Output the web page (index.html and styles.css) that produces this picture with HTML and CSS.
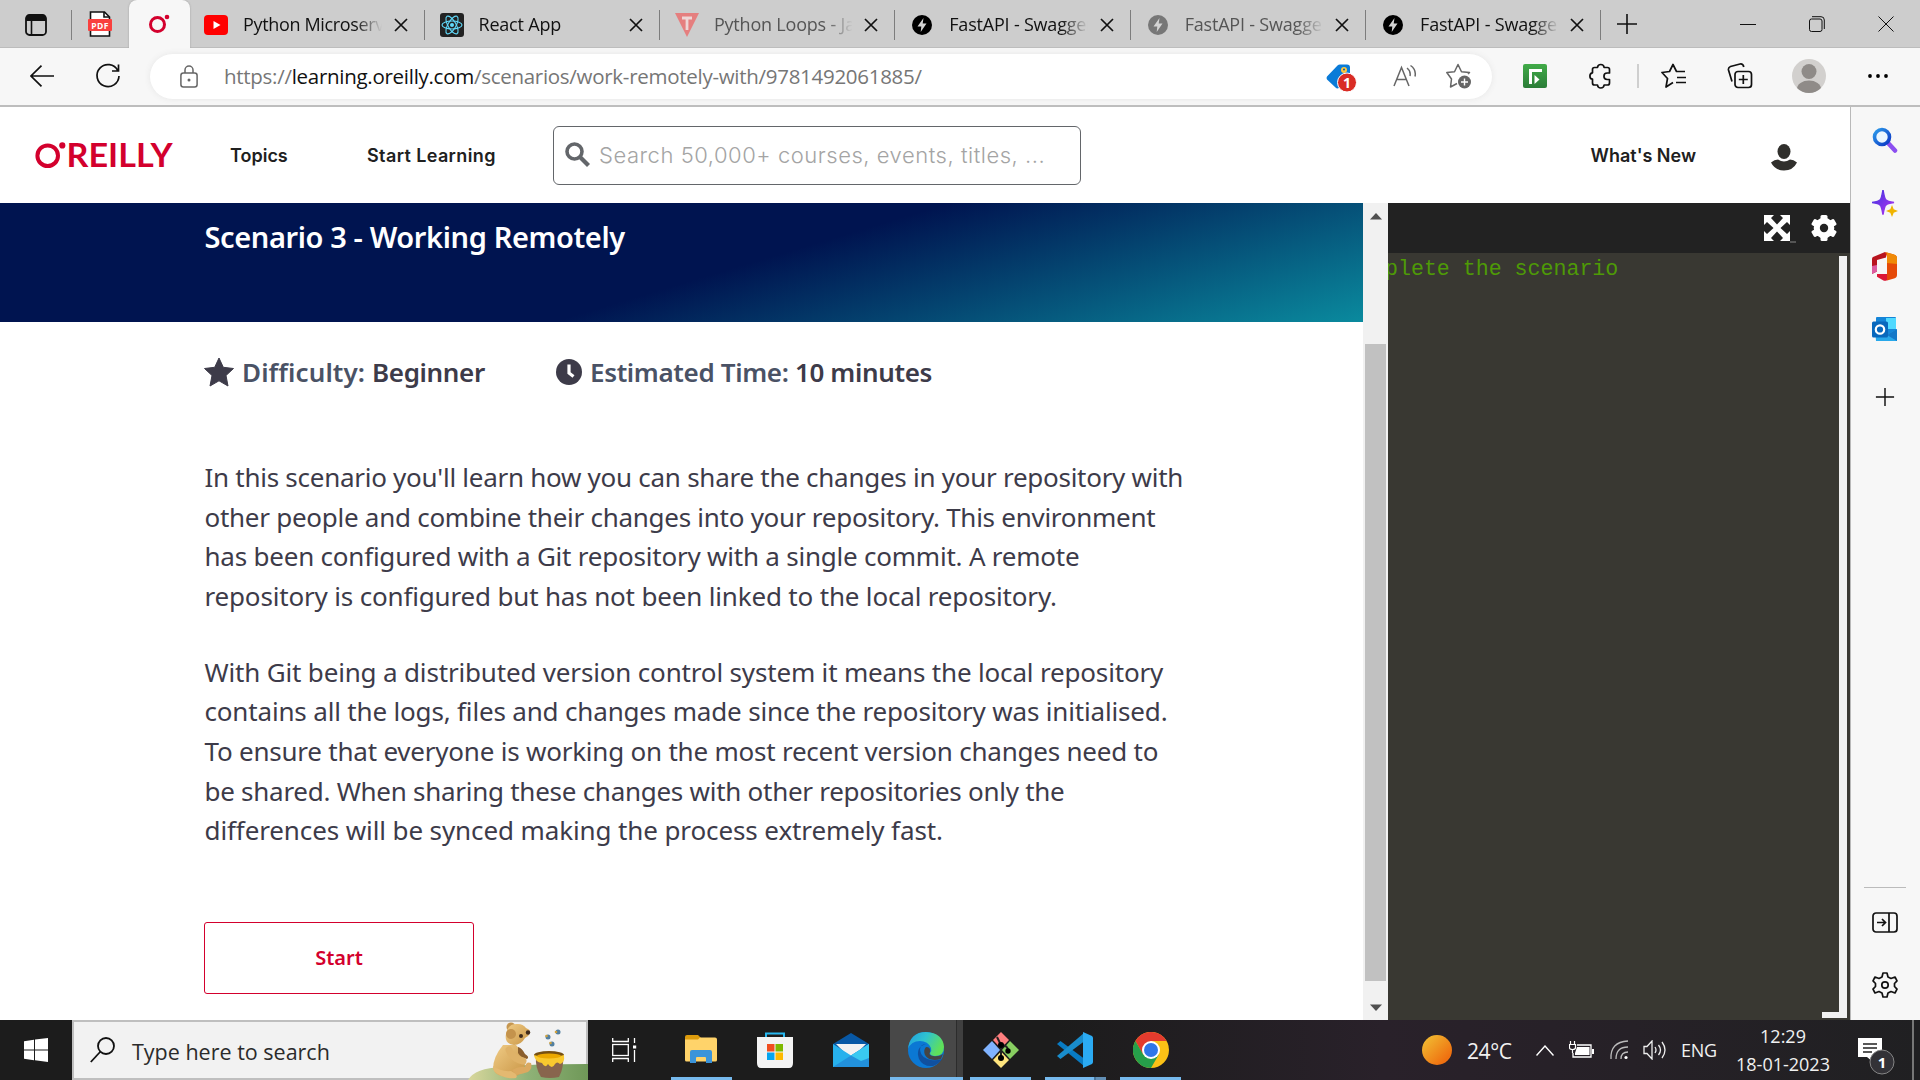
FILE: index.html
```html
<!DOCTYPE html>
<html lang="en">
<head>
<meta charset="utf-8">
<title>Scenario 3 - Working Remotely</title>
<link rel="stylesheet" href="styles.css">
</head>
<body>
<svg class="defs" width="0" height="0">
  <defs>
    <symbol id="x" viewBox="0 0 14 14"><path d="M1 1l12 12M13 1L1 13" fill="none" stroke="#111" stroke-width="1.7"/></symbol>
    <symbol id="bolt" viewBox="0 0 20 20"><circle cx="10" cy="10" r="10"/><path d="M11.500 3L5.500 11.500H9.300L8.700 17L14.500 8.500H10.700z" fill="#d4d4d4"/></symbol>
    <symbol id="plus" viewBox="0 0 22 22"><path d="M11 1v20M1 11h20" fill="none" stroke="#111" stroke-width="1.600"/></symbol>
    <linearGradient id="sun" x1="0" y1="0" x2="1" y2="1"><stop offset=".1" stop-color="#f1ba31"/><stop offset=".8" stop-color="#ef7010"/></linearGradient>
    <linearGradient id="mag" x1="0" y1="0" x2="1" y2="1"><stop offset="0" stop-color="#2d9bea"/><stop offset="1" stop-color="#0a36c4"/></linearGradient>
    <linearGradient id="spark" x1="0" y1="0" x2="1" y2="1"><stop offset="0" stop-color="#3c33e0"/><stop offset="1" stop-color="#b535f0"/></linearGradient>
    <linearGradient id="edge1" x1="0" y1="0" x2="1" y2=".4"><stop offset="0" stop-color="#1f9de0"/><stop offset=".5" stop-color="#2fc3cf"/><stop offset="1" stop-color="#5fe05a"/></linearGradient>
    <linearGradient id="hill"><stop offset="0" stop-color="#d9d79c"/><stop offset=".5" stop-color="#8fb277"/><stop offset="1" stop-color="#6f9858"/></linearGradient>
    <linearGradient id="fur" x1="0" y1="0" x2="1" y2="1"><stop offset="0" stop-color="#f0cc86"/><stop offset="1" stop-color="#c99545"/></linearGradient>
    <linearGradient id="green" x1="0" y1="0" x2="0" y2="1"><stop offset="0" stop-color="#41ab48"/><stop offset="1" stop-color="#2b7d38"/></linearGradient>
  </defs>
</svg>

<div class="tabs">
  <div class="tab-tools"><svg width="22" height="22" viewBox="0 0 22 22"><rect x="1" y="1" width="20" height="20" rx="3.500" fill="none" stroke="#111" stroke-width="1.800"/><path d="M1 7V4q0-3 3-3h14q3 0 3 3v3z" fill="#111"/><path d="M6.500 7v14" stroke="#111" stroke-width="1.600"/></svg></div>
  <div class="tab-pin"><svg width="24" height="26" viewBox="0 0 24 26"><path d="M2.500 1h14l5 5v19h-19z" fill="#fff" stroke="#111" stroke-width="1.600"/><path d="M16 1v5h5" fill="none" stroke="#111" stroke-width="1.600"/><rect x="0" y="8" width="24" height="12" rx="1" fill="#f9403e"/><text x="12" y="17.600" class="pdf">PDF</text></svg></div>
  <div class="tab-active"><svg width="22" height="20" viewBox="0 0 22 20"><circle cx="8.500" cy="10.500" r="7" fill="none" stroke="#d3002d" stroke-width="3"/><circle cx="18" cy="3" r="2.300" fill="#d3002d"/></svg></div>
  <div class="tab first"><svg width="24" height="20" viewBox="0 0 24 20"><rect width="24" height="20" rx="4" fill="#f00"/><path d="M9.500 6l7 4-7 4z" fill="#fff"/></svg><span class="tab-name">Python Microservices</span><svg class="close"><use href="#x"/></svg></div>
  <div class="tab"><svg width="24" height="24" viewBox="0 0 24 24"><rect width="24" height="24" rx="3" fill="#222"/><g fill="none" stroke="#61dafb" stroke-width="1.100"><ellipse cx="12" cy="12" rx="10" ry="4"/><ellipse cx="12" cy="12" rx="10" ry="4" transform="rotate(60 12 12)"/><ellipse cx="12" cy="12" rx="10" ry="4" transform="rotate(120 12 12)"/></g><circle cx="12" cy="12" r="2" fill="#61dafb"/></svg><span class="tab-name">React App</span><svg class="close"><use href="#x"/></svg></div>
  <div class="tab asleep"><svg width="24" height="24" viewBox="0 0 24 24"><path d="M0 0h24L12 24z" fill="#e57f7f"/><path d="M7 5h10M12 5v12" stroke="#eed6d6" stroke-width="2.800"/></svg><span class="tab-name">Python Loops - Javatpoint</span><svg class="close"><use href="#x"/></svg></div>
  <div class="tab"><svg width="24" height="20" viewBox="-2 0 24 20"><use href="#bolt" width="20" height="20"/></svg><span class="tab-name">FastAPI - Swagger UI</span><svg class="close"><use href="#x"/></svg></div>
  <div class="tab asleep"><svg width="24" height="20" viewBox="-2 0 24 20" fill="#777"><use href="#bolt" width="20" height="20"/></svg><span class="tab-name">FastAPI - Swagger UI</span><svg class="close"><use href="#x"/></svg></div>
  <div class="tab"><svg width="24" height="20" viewBox="-2 0 24 20"><use href="#bolt" width="20" height="20"/></svg><span class="tab-name">FastAPI - Swagger UI</span><svg class="close"><use href="#x"/></svg></div>
  <svg class="new-tab" width="22" height="22"><use href="#plus"/></svg>
  <div class="window-buttons">
    <svg width="16" height="16"><path d="M0 8.500h16" stroke="#111"/></svg>
    <svg width="16" height="16" fill="none" stroke="#111"><rect x=".5" y="3" width="12.500" height="12.500" rx="2"/><path d="M3 .7h9q3.300 0 3.300 3.300v9"/></svg>
    <svg width="16" height="16"><path d="M.5.500l15 15M15.500.5l-15 15" stroke="#111"/></svg>
  </div>
</div>

<div class="toolbar">
  <svg class="back" width="24" height="22" viewBox="0 0 24 22"><path d="M24 11H1M11.500.7L1 11l10.500 10.300" fill="none" stroke="#111" stroke-width="1.700"/></svg>
  <svg class="reload" width="26" height="26" viewBox="0 0 26 26"><path d="M22.800 7.600A11 11 0 1 0 24 13M23.500 1.500V8H17" fill="none" stroke="#111" stroke-width="1.700"/></svg>
  <div class="address">
    <svg class="lock" width="18" height="23" viewBox="0 0 18 23"><rect x=".9" y="8" width="16.200" height="14" rx="2.500" fill="none" stroke="#666" stroke-width="1.500"/><path d="M5 8V5a4 4 0 0 1 8 0v3" fill="none" stroke="#666" stroke-width="1.500"/><circle cx="9" cy="15" r="1.500" fill="#666"/></svg>
    <div class="url">https://<b>learning.oreilly.com</b>/scenarios/work-remotely-with/9781492061885/</div>
    <svg class="tag" width="32" height="28" viewBox="0 0 32 28"><path d="M11.500 1.500Q12.500.5 14 .5h7q3 0 3 3v9L13 24Q11 25 9.500 23.500L1 15.500Q0 14 1 12.500z" fill="#0a7bd8"/><circle cx="18" cy="6" r="3" fill="#ffc83d"/><circle cx="18" cy="5.500" r="1" fill="#0a5aa0"/><circle cx="21" cy="18.500" r="9.500" fill="#d92c25" stroke="#fff"/><text x="21" y="23.800" class="badge">1</text></svg>
    <svg class="read" width="24" height="24" viewBox="0 0 24 24" fill="none" stroke="#666" stroke-width="1.500"><path d="M1 22L8.500 3.500L16 22M3.500 15.500h10M14 4q4 3 3 8M17.500 1.500q6 4 4.500 11"/></svg>
    <svg class="fav" width="26" height="26" viewBox="0 0 26 26"><path d="M11 20.500L4.500 24l1-8L.8 9.500l7.700-.7L12 1.500l3.500 7.300 8 .7-1.500 1.500" fill="none" stroke="#666" stroke-width="1.500" stroke-linejoin="round"/><circle cx="18.500" cy="19" r="6.500" fill="#666"/><path d="M18.500 15.500v7M15 19h7" stroke="#fff" stroke-width="1.400"/></svg>
  </div>
  <svg class="ext" width="24" height="24" viewBox="0 0 24 24"><rect width="24" height="24" rx="2" fill="url(#green)"/><path d="M6 20V5h13v3H9v12z" fill="#fff"/><path d="M11.500 11l5 4.500-5 4.500z" fill="#fff"/></svg>
  <svg class="puzzle" width="24" height="26" viewBox="0 0 24 26"><path d="M5.500 4.500h3q.3-3 3.300-3t3.300 3h3.400q2 0 2 2V10h-2.300a3 3 0 0 0 0 6.500h2.300v3.500q0 2-2 2h-3.400q-.3 3-3.300 3t-3.300-3h-3q-2 0-2-2v-3.800Q.9 16 .9 13t2.600-3.200V6.500q0-2 2-2z" fill="none" stroke="#111" stroke-width="1.700" stroke-linejoin="round"/></svg>
  <i class="bar"></i>
  <svg class="favs" width="26" height="26" viewBox="0 0 26 26"><path d="M12 19.500L5 24l1.500-8.500L1 9.500l7.500-1L12 1.500l3.500 7H24M16 14.500h9M15 19.500h10" fill="none" stroke="#111" stroke-width="1.700" stroke-linejoin="round"/></svg>
  <svg class="coll" width="26" height="26" viewBox="0 0 26 26" fill="none" stroke="#111" stroke-width="1.700"><rect x="8" y="8.500" width="16.500" height="16" rx="3"/><path d="M16.300 12v9M11.800 16.500h9M5 18.500L1.500 7Q1 4.500 3.500 3.500L13 1q3-.5 3.800 3"/></svg>
  <svg class="profile" width="34" height="34" viewBox="0 0 34 34"><clipPath id="pc"><circle cx="17" cy="17" r="17"/></clipPath><g clip-path="url(#pc)"><rect width="34" height="34" fill="#d2d0ce"/><circle cx="17" cy="12.500" r="7.500" fill="#8f8b88"/><ellipse cx="17" cy="30" rx="12" ry="8.500" fill="#8f8b88"/></g></svg>
  <svg class="dots" width="20" height="4"><circle cx="2" cy="2" r="1.900"/><circle cx="10" cy="2" r="1.900"/><circle cx="18" cy="2" r="1.900"/></svg>
</div>

<div class="middle">
  <div class="site">
    <header class="site-header">
      <svg class="logo" width="138" height="26" viewBox="0 0 138 26"><circle cx="12.700" cy="13.700" r="10.300" fill="none" stroke="#d3002d" stroke-width="4"/><circle cx="27.300" cy="3.400" r="3.100" fill="#d3002d"/><text x="31.500" y="25" textLength="106" lengthAdjust="spacingAndGlyphs" class="logo-text">REILLY</text></svg>
      <a class="nav topics">Topics</a>
      <a class="nav learning">Start Learning</a>
      <div class="search"><svg width="26" height="26" viewBox="0 0 26 26" fill="none" stroke="#63666a"><circle cx="9.500" cy="9.500" r="7.500" stroke-width="3.600"/><path d="M15 15l8.500 8.500" stroke-width="4.200"/></svg><span>Search 50,000+ courses, events, titles, ...</span></div>
      <a class="nav news">What's New</a>
      <svg class="user" width="26" height="27" viewBox="0 0 26 27" fill="#302f2c"><ellipse cx="13" cy="7.500" rx="6.500" ry="7.500"/><path d="M0 18.500q3.500-3 7-3 6 4 12 0 3.500 0 7 3-4 8-13 8t-13-8z"/></svg>
    </header>
    <div class="panes">
      <main class="lesson">
        <div class="hero"><h1>Scenario 3 - Working Remotely</h1></div>
        <div class="content">
          <div class="facts">
            <div class="fact difficulty"><svg width="30" height="29" viewBox="0 0 30 29"><path d="M15 0l4.300 9.300 10.200 1.200-7.500 7 2 10.500-9-5.200-9 5.200 2-10.500-7.500-7 10.200-1.200z" fill="#3d3b49" stroke="#3d3b49" stroke-linejoin="round"/></svg><span>Difficulty: <b>Beginner</b></span></div>
            <div class="fact time"><svg width="26" height="26" viewBox="0 0 26 26"><circle cx="13" cy="13" r="13" fill="#3d3b49"/><path d="M13 5.500V14l4.500 3.500" fill="none" stroke="#fff" stroke-width="3.200"/></svg><span>Estimated Time: <b>10 minutes</b></span></div>
          </div>
          <p><span class="tight">In this scenario you'll learn how you can share the changes in your repository with</span><br><span class="tight">other people and combine their changes into your repository. This environment</span><br><span class="snug">has been configured with a Git repository with a single commit. A remote</span><br><span class="close-set">repository is configured but has not been linked to the local repository.</span></p>
          <p><span class="close-set">With Git being a distributed version control system it means the local repository</span><br><span class="close-set">contains all the logs, files and changes made since the repository was initialised.</span><br><span class="snug">To ensure that everyone is working on the most recent version changes need to</span><br><span class="tight">be shared. When sharing these changes with other repositories only the</span><br><span class="easy">differences will be synced making the process extremely fast.</span></p>
          <button class="start">Start</button>
        </div>
      </main>
      <div class="scroll">
        <svg width="12" height="7"><path d="M0 6.500L6 0l6 6.500z" fill="#505050"/></svg>
        <div class="thumb"></div>
        <svg width="12" height="7"><path d="M0 .5L6 7l6-6.500z" fill="#505050"/></svg>
      </div>
      <section class="terminal">
        <div class="terminal-bar">
          <svg width="26" height="26" viewBox="0 0 26 26" fill="#fff"><path d="M0 0h10L7 3l6 6.500L19 3l-3-3h10v10l-3-3-6.500 6 6.500 6 3-3v10H16l3-3-6-6.500L7 23l3 3H0V16l3 3 6.500-6L3 7l-3 3z"/></svg><i class="cursor"></i>
          <svg width="26" height="26" viewBox="-13 -13 26 26"><g fill="#fff"><circle r="10.300"/><rect x="-3.500" y="-13" width="7" height="26" rx="1.500"/><rect x="-3.500" y="-13" width="7" height="26" rx="1.500" transform="rotate(60)"/><rect x="-3.500" y="-13" width="7" height="26" rx="1.500" transform="rotate(120)"/></g><circle r="4.200" fill="#222"/></svg>
        </div>
        <div class="terminal-body">
          <pre>plete the scenario</pre>
          <div class="terminal-scroll"></div>
        </div>
      </section>
    </div>
  </div>
  <aside class="side">
    <svg width="26" height="26" viewBox="0 0 26 26"><path d="M17 17l6 6.500" stroke="#8c4ff0" stroke-width="4.500" stroke-linecap="round"/><circle cx="10" cy="10" r="7.500" fill="#eaf6ff" stroke="url(#mag)" stroke-width="3.600"/></svg>
    <svg width="26" height="27" viewBox="0 0 26 27"><path d="M11 0q1.500 9 3 10 1 1.500 8 2.500-7 1-8 2.500-1.500 1-3 9.500-1.500-8.500-3-9.500-1-1.500-8-2.500 7-1 8-2.500 1.500-1 3-10z" fill="url(#spark)" stroke="url(#spark)" stroke-width="1.500"/><path d="M20 15l1.700 4.300L26 21l-4.300 1.700L20 27l-1.700-4.300L14 21l4.300-1.700z" fill="#f0b400"/></svg>
    <svg class="office" width="26" height="29" viewBox="0 0 26 29"><path d="M13 0L1 5Q0 5.500 0 7v15l5-2.500V8l9-2.500V1z" fill="#b8141e"/><path d="M0 14v8l5-2.500V13z" fill="#dd5ca0"/><path d="M13 0l9 2.500Q25 3.500 25 6v17q0 2.500-3 3.500l-7 2V5z" fill="#e54a08"/><path d="M13 0l9 2.500Q25 3.500 25 6v6l-10-1V1z" fill="#ef8a08"/><path d="M5 22h10v6.300q-2 1-4 0l-6-3.500z" fill="#dc1736"/></svg>
    <svg class="outlook" width="26" height="25" viewBox="0 0 26 25"><rect x="4" width="20" height="18" rx="1" fill="#1585d8"/><rect x="14" y="1" width="10" height="11" fill="#50d9ff"/><path d="M3 11l12 7 10-6v12H4z" fill="#28a8ea"/><path d="M25 12v12L15 18z" fill="#1478c8"/><rect y="4.500" width="16" height="16" rx="1.500" fill="#0868bd"/><circle cx="8" cy="12.500" r="4.200" fill="none" stroke="#fff" stroke-width="2.200"/></svg>
    <svg class="side-add" width="20" height="20" viewBox="0 0 22 22"><use href="#plus"/></svg>
    <hr>
    <svg width="26" height="21" viewBox="0 0 26 21" fill="none" stroke="#111" stroke-width="1.700"><rect x="1" y="1" width="24" height="19" rx="3"/><path d="M17 1v19M5 10.500h8M10 7l3.500 3.500L10 14"/></svg>
    <svg class="settings" width="26" height="26" viewBox="-13 -13 26 26" fill="none" stroke="#111" stroke-width="1.700" stroke-linejoin="round"><path d="M-2-12h4l1 4 3 1.500 4-1.500 2 3.800L9.500-1.500v3L12 4.200 10 8 6 6.500 3 8l-1 4h-4l-1-4-3-1.500L-10 8l-2-3.800 2.500-2.700v-3L-12-4.200-10-8l4 1.500L-3-8z"/><circle r="3.200"/></svg>
  </aside>
</div>

<footer class="taskbar">
  <div class="win"><svg width="24" height="24" viewBox="0 0 24 24" fill="#fff"><path d="M0 3.300l10-1.500v9.700H0zM11 1.600L24 0v11.500H11zM0 12.500h10v9.800L0 20.700zM11 12.500h13V24l-13-1.700z"/></svg></div>
  <div class="task-search"><svg width="25" height="26" viewBox="0 0 25 26" fill="none" stroke="#111" stroke-width="1.800"><circle cx="16" cy="9" r="8"/><path d="M10.500 14.500L.8 25"/></svg><span>Type here to search</span>
    <svg class="bear" width="120" height="58" viewBox="468 1022 120 58">
      <path d="M468 1080q7-12 34-13 20-3 86-3v16z" fill="url(#hill)"/>
      <circle cx="511" cy="1027" r="4.500" fill="#c59650"/>
      <path d="M503 1045q-10 12-10 24 3 8 16 8 15 0 16-14-1-10-9-18z" fill="url(#fur)"/>
      <path d="M506 1034q2-11 12-10 5 0 8 4 5 2 4 5-1 3-5 5-4 7-11 7-10-1-8-11z" fill="url(#fur)"/>
      <circle cx="511" cy="1034" r="5" fill="#c4934c"/><circle cx="521" cy="1036" r="2" fill="#3e2a1c"/><circle cx="528" cy="1032.500" r="2.200" fill="#3e2a1c"/>
      <path d="M518 1047q4 1 7 7 5 3 2 5-6-1-9-6" fill="#8a5e2d"/>
      <path d="M509 1050q4 9 14 11" fill="none" stroke="#dfb268" stroke-width="7" stroke-linecap="round"/>
      <path d="M512 1070q7-4 13-3 1-6 6-4 2 5-3 9-6 2-12 3" fill="#dba960"/>
      <path d="M493 1066q8 6 18 5 8 4 5 7-12 2-22-7z" fill="#e4b971"/>
      <path d="M536 1056h27q1 12-4 21-9 2-18 0-6-9-5-21z" fill="#88654d"/>
      <ellipse cx="549" cy="1055" rx="15" ry="4" fill="#765012"/>
      <path d="M534 1055q15 5 30 0 1 8-4 9-3-3-5 0-3 6-7 0-3 5-6-1-7-1-8-8z" fill="#f9c92f"/>
      <ellipse cx="549" cy="1056" rx="12" ry="2.500" fill="#eba800"/>
      <g fill="#5380a0"><circle cx="548" cy="1037" r="2.500"/><circle cx="558" cy="1032" r="2.500"/><circle cx="552" cy="1044" r="2.500"/></g><g fill="#d0a13c"><circle cx="546.500" cy="1036" r="1.300"/><circle cx="556" cy="1032" r="1.300"/><circle cx="550.500" cy="1043" r="1.300"/></g>
    </svg>
  </div>
  <div class="app view"><svg width="25" height="24" viewBox="0 0 25 24" fill="none" stroke="#fff" stroke-width="1.300"><path d="M.7 0v3.500h15.600V0M.7 24v-3.500h15.600V24M22.500 0v5M22.500 12v12"/><rect x=".7" y="6.500" width="15.600" height="11"/><path d="M21 9h3.200" stroke-width="3"/></svg></div>
  <div class="app files on"><svg width="32" height="28" viewBox="0 0 32 28"><path d="M0 2q0-2 2-2h11l3 3-3 3H0z" fill="#dc9b0c"/><path d="M0 4.500h13l2-2h15q2 0 2 2V25q0 1.500-1.500 1.500h-29Q0 26.500 0 25z" fill="#ffd36a"/><path d="M5 28V17q0-2 2-2h18q2 0 2 2v11h-6v-5q0-1-1-1h-8q-1 0-1 1v5z" fill="#3b94da"/></svg></div>
  <div class="app store"><svg width="36" height="36" viewBox="0 0 36 36"><path d="M9 6V1.500h18V6" fill="none" stroke="#27b8f0" stroke-width="2"/><path d="M0 5h36v26q0 5-4 5H4q-4 0-4-5z" fill="#f3f3f3"/><path d="M10 12h7.500v7.500H10z" fill="#f04e1f"/><path d="M18.500 12H26v7.500h-7.500z" fill="#7eb900"/><path d="M10 20.500h7.500V28H10z" fill="#05a5ef"/><path d="M18.500 20.500H26V28h-7.500z" fill="#fdb900"/></svg></div>
  <div class="app mail"><svg width="36" height="34" viewBox="0 0 36 34"><path d="M0 11L18 0l18 11v10H0z" fill="#0858a5"/><path d="M3 11h30L18 26z" fill="#f2f2f2"/><path d="M0 11l18 11.500L36 11v23H0z" fill="#27b1ed"/><path d="M0 34L36 11v23z" fill="#2291dc"/><path d="M18 22.500L36 11v14l-8 3z" fill="#39c9f1"/></svg></div>
  <div class="app edge on"><svg width="36" height="36" viewBox="0 0 36 36"><circle cx="18" cy="18" r="18" fill="#0b78d4"/><path d="M0 17Q2 0 18 0q17 1 18 15 0 9-9 9-5 0-5-3 2-2 1-5-3-7-11-7Q3 9 0 17z" fill="url(#edge1)"/><path d="M12 18q0-6 6-6-11 3-7 15 4 8 14 7 6-2 9-7-5 2-11 1-10-2-11-10z" fill="#10509f"/><path d="M18 15q-3 3-1 8 4 7 16 4l2-5q-4 3-10 2-5-1-3-4 1-5-4-5z" fill="#454545"/></svg></div>
  <div class="app git on"><svg width="36" height="36" viewBox="0 0 36 36"><path d="M18 0l8 8-8 8.500L10 8z" fill="#ff7f7f"/><path d="M27 9l9 9-9 9-8-9z" fill="#88cf61"/><path d="M9 9l8 9-8 9-9-9z" fill="#80b3ff"/><path d="M18 19.500l8 8.500-8 8-8-8z" fill="#ffe57e"/><path d="M14 5l4 8v13M18 13q7 0 7 6" fill="none" stroke="#222" stroke-width="2"/><circle cx="18" cy="13" r="3"/><circle cx="25" cy="19" r="2.700"/><circle cx="18" cy="26" r="3"/></svg></div>
  <div class="app code on"><svg width="36" height="36" viewBox="0 0 36 36"><path d="M0 12l3.500-3L27 26.500V34z" fill="#087bc3"/><path d="M0 24l3.500 3L27 9.500V1z" fill="#198dcc"/><path d="M26 0l9 4q1 1 1 2v24q0 1-1 2l-9 4z" fill="#2babf3"/></svg></div>
  <div class="app chrome on"><svg width="36" height="36" viewBox="0 0 36 36"><circle cx="18" cy="18" r="18" fill="#fbc116"/><path d="M2.400 9A18 18 0 0 1 33.600 9H18l-8 13.500z" fill="#e33b2e"/><path d="M2.400 9A18 18 0 0 0 18 36l7.800-13.500-7.800 4-7.800-4z" fill="#269f4a"/><circle cx="18" cy="18" r="9" fill="#fff"/><circle cx="18" cy="18" r="7" fill="#2f76e8"/></svg></div>
  <div class="tray">
    <svg width="30" height="30"><circle cx="15" cy="15" r="15" fill="url(#sun)"/></svg>
    <span class="temp">24°C</span>
    <svg class="chev" width="18" height="11"><path d="M.5 10.500L9 1l8.500 9.500" fill="none" stroke="#fff" stroke-width="1.400"/></svg>
    <svg class="battery" width="25" height="18" viewBox="0 0 25 18"><path d="M8 4h14v12H4v-4" fill="none" stroke="#fff" stroke-width="1.300"/><path d="M8 6h12.500v8H6v-2zM23 8h2v5h-2z" fill="#fff"/><path d="M1.500 0v3M5.500 0v3M.5 3.500h6v3q0 2-3 2t-3-2zM3.500 9v3" fill="none" stroke="#fff" stroke-width="1.200"/></svg>
    <svg class="wifi" width="20" height="20" viewBox="0 0 20 20" fill="none" stroke="#bbb" stroke-width="1.300"><path d="M2 19Q1 2 19 1M7 19q0-12 12-12M12 19q0-7 7-7"/><circle cx="17" cy="17.500" r="1.600" fill="#fff" stroke="none"/></svg>
    <svg class="sound" width="24" height="20" viewBox="0 0 24 20" fill="none" stroke="#eee" stroke-width="1.300"><path d="M1 6.500h3L9 1v18l-5-5.500H1zM12 7q2 3 0 6M15.500 5q4 5 0 10M19 2q6 8 0 16"/></svg>
    <span class="lang">ENG</span>
    <div class="clock"><span>12:29</span><span>18-01-2023</span></div>
    <svg class="notes" width="37" height="37" viewBox="0 0 37 37"><path d="M0 0h24v19H15v5l-6-5H0z" fill="#fff"/><path d="M5 6h14M5 10h14M5 14h9" stroke="#222" stroke-width="1.300"/><circle cx="24" cy="24" r="12" fill="#333237" stroke="#858585"/><text x="24" y="30" class="count">1</text></svg>
    <i class="peek"></i>
  </div>
</footer>
</body>
</html>
```
FILE: styles.css
```css
* { box-sizing: border-box; }
body { margin: 0; width: 1920px; height: 1080px; overflow: hidden; display: flex; flex-direction: column; font-family: "Open Sans", sans-serif; background: #fff; }
svg { flex: none; display: block; }
.defs { position: absolute; }

/* Tab strip */
.tabs { height: 48px; flex: none; background: #cdcdcd; display: flex; align-items: center; border-bottom: 1px solid #bcbcbc; }
.tab-tools { width: 72px; height: 30px; display: flex; align-items: center; padding-left: 25px; border-right: 1px solid #808080; margin-top: 2px; }
.tab-pin { width: 57px; padding-left: 16px; }
.tab-active { width: 61px; height: 48px; background: #f7f7f7; border-radius: 8px 8px 0 0; display: flex; align-items: center; justify-content: center; box-shadow: 0 0 2px #999; }
.tab { width: 235.400px; height: 30px; display: flex; align-items: center; padding: 0 16px 0 15px; border-right: 1.500px solid #7d7d7d; margin-top: 2px; }
.tab.first { width: 234.500px; padding-left: 14px; }
.tab-name { width: 139px; margin: 0 12px 1px 15px; overflow: hidden; white-space: nowrap; font-size: 18px; letter-spacing: -.2px; color: #111; -webkit-mask-image: linear-gradient(90deg, #000 112px, transparent 139px); mask-image: linear-gradient(90deg, #000 112px, transparent 139px); }
.first .tab-name { letter-spacing: -.35px; }
.asleep .tab-name { color: #555; }
.close { width: 14px; height: 14px; }
.new-tab { margin-left: 15px; }
.window-buttons { margin-left: auto; padding-right: 26px; display: flex; gap: 53px; }
.pdf { font: 700 8.500px "Open Sans", sans-serif; fill: #fff; text-anchor: middle; letter-spacing: .4px; }

/* Address bar */
.toolbar { height: 59px; flex: none; display: flex; align-items: center; background: #f7f7f7; border-bottom: 2px solid #bdbdbd; padding: 0 32px 1px 30px; }
.reload { margin-left: 41px; }
.address { width: 1342px; height: 45px; margin-left: 29px; border-radius: 23px; background: #fff; display: flex; align-items: center; padding: 0 20px 0 30px; box-shadow: 0 0 6px #e6e6e6; }
.url { margin: 0 0 1px 26px; font-size: 20.500px; letter-spacing: -.28px; color: #767676; white-space: nowrap; }
.url b { font-weight: 400; color: #111; }
.tag { margin-left: auto; margin-top: 4px; }
.read { margin-left: 35px; }
.fav { margin-left: 29px; }
.badge { font: 700 14px "Open Sans", sans-serif; fill: #fff; text-anchor: middle; }
.ext { margin-left: 31px; }
.puzzle { margin-left: 42px; }
.bar { width: 2px; height: 24px; margin-left: 24px; background: #cfcfcf; }
.favs { margin-left: 22px; }
.coll { margin-left: 40px; }
.profile { margin-left: 39px; }
.dots { margin-left: auto; }

.middle { height: 913px; flex: none; display: flex; }
.site { width: 1851px; border-right: 1px solid #b9b9b9; display: flex; flex-direction: column; }

/* Site header */
.site-header { height: 96px; display: flex; align-items: center; padding: 0 53px 0 35px; }
.logo-text { font: 700 33px Lato, sans-serif; fill: #d3002d; }
.nav { font: 600 18px Inter, sans-serif; color: #202020; white-space: nowrap; }
.topics { margin-left: 57px; width: 137px; }
.learning { width: 186px; letter-spacing: .38px; }
.search { width: 528px; height: 59px; border: 1.500px solid #63666a; border-radius: 6px; display: flex; align-items: center; padding-left: 11px; gap: 8px; }
.search span { font: 300 22px Inter, sans-serif; letter-spacing: .53px; color: #a4a4a4; white-space: nowrap; }
.news { margin-left: auto; }
.user { margin-left: 75px; margin-top: 4px; }

/* Lesson pane */
.panes { height: 817px; display: flex; }
.lesson { width: 1363px; }
.hero { height: 119px; padding: 14px 0 0 204.500px; background: linear-gradient(163.300deg, #001450 54%, #0a8a9e 100%); }
h1 { margin: 0; font: 600 29px/40px "Noto Sans", sans-serif; letter-spacing: -.38px; color: #fff; white-space: nowrap; }
.content { padding: 30px 0 0 204px; font-family: "Noto Sans", sans-serif; color: #3d3b49; }
.facts { display: flex; height: 40px; margin-bottom: 66px; }
.fact { display: flex; align-items: center; font-size: 26px; font-weight: 600; color: #4a5265; white-space: nowrap; }
.fact b { font-weight: 600; color: #3d3b49; letter-spacing: -.35px; }
.difficulty { width: 352px; gap: 8px; letter-spacing: .1px; }
.time { gap: 8px; letter-spacing: -.35px; }
p { margin: 0 0 36.500px; padding-left: .5px; font-size: 26px; line-height: 39.600px; white-space: nowrap; }
.tight { letter-spacing: -.27px; }
.snug { letter-spacing: -.22px; }
.close-set { letter-spacing: -.17px; }
.easy { letter-spacing: -.11px; }
.start { display: block; margin-top: 71px; width: 270px; height: 72px; background: #fff; border: 1.500px solid #d3002d; border-radius: 3px; color: #d3002d; font: 600 20px "Noto Sans", sans-serif; }
.scroll { width: 25px; background: #f1f1f1; display: flex; flex-direction: column; align-items: center; padding: 10px 0 9px; }
.thumb { width: 21px; height: 637px; margin: 124px 0 auto; background: #c1c1c1; }

/* Terminal pane */
.terminal { width: 462px; display: flex; flex-direction: column; background: #393832; }
.terminal-bar { height: 50px; background: #222; display: flex; align-items: center; justify-content: flex-end; padding: 0 13px 0 0; }
.cursor { width: 6px; height: 2px; background: #555; margin: 27px 15px 0 0; }
.terminal-body { flex: 1; display: flex; justify-content: space-between; overflow: hidden; }
pre { margin: 4px 0 0 -3px; font: 21.600px/24px "Liberation Mono", monospace; color: #4e9a06; }
.terminal-scroll { width: 25px; height: 762px; margin: 3px 3px 0 0; border-right: 8px solid #f1f1f1; border-bottom: 6px solid #f1f1f1; }

/* Browser sidebar */
.side { width: 69px; background: #f7f7f7; display: flex; flex-direction: column; align-items: center; padding: 20px 1px 22px 0; gap: 37px; }
.office { margin-top: -2px; }
.outlook { margin-top: -1px; }
.side-add { margin-top: 8px; }
.settings { margin-top: 2px; }
.side hr { width: 42px; border: 0; border-top: 1px solid #bbb; margin: auto 0 -13px; }

/* Windows taskbar */
.taskbar { height: 60px; flex: none; display: flex; background: linear-gradient(90deg, #1c1c1c 0 55%, #29212a 72%, #262127 85%, #202022); }
.win { width: 72px; padding: 18px 0 0 24px; }
.task-search { width: 516px; background: #f2f2f2; border: 2px solid #bfbfbf; display: flex; align-items: center; padding-left: 16px; position: relative; font-size: 21.500px; color: #2b2b2b; }
.task-search span { margin: 2px 0 0 17px; white-space: nowrap; }
.bear { position: absolute; right: -2px; bottom: -2px; }
.app { display: flex; align-items: center; justify-content: center; width: 61px; margin-right: 14px; }
.on { border-bottom: 3px solid #76b9ed; padding-top: 3px; }
.app.view { width: 72px; margin-right: 11px; }
.app.files { padding: 0 1px 0 0; }
.app.store { padding-right: 3px; }
.app.mail { margin-right: 8px; padding-right: 1px; }
.app.edge { width: 73px; margin-right: 7px; padding-right: 1px; background: linear-gradient(90deg, #484848 66px, #2c2c2c 66px 67px, #3f3f3f 67px); }
.app.code { padding-right: 1px; border-image: linear-gradient(90deg, #76b9ed 47px, #49759a 47px 49px, #628fb5 49px) 3; }
.edge svg { margin-right: 1px; }
.tray { margin-left: auto; display: flex; align-items: center; color: #f1f1f1; padding-right: 6px; }
.temp { font-size: 21px; letter-spacing: -.4px; width: 69px; margin: 2px 0 0 15px; white-space: nowrap; }
.battery { margin-left: 15px; }
.wifi { margin-left: 15px; }
.sound { margin-left: 14px; }
.lang { font-size: 18px; letter-spacing: -.3px; width: 50px; margin-left: 14px; }
.clock { width: 104px; height: 60px; display: flex; flex-direction: column; align-items: center; font-size: 18px; line-height: 28px; padding-top: 2px; white-space: nowrap; }
.notes { margin: 12px 17px 0 23px; }
.count { font: 700 15px "Open Sans", sans-serif; fill: #fff; text-anchor: middle; }
.peek { width: 2px; height: 60px; background: #777; }
```
